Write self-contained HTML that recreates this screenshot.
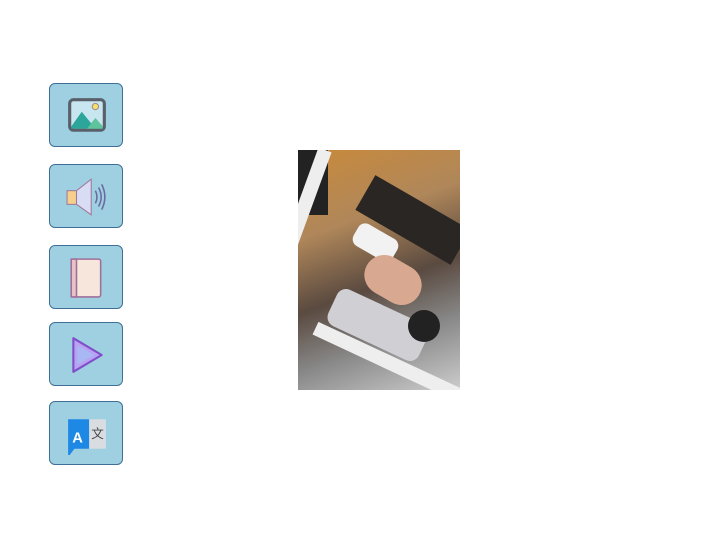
<!DOCTYPE html>
<html><head><style>
body{margin:0;width:720px;height:540px;background:#fff;position:relative;overflow:hidden;font-family:"Liberation Sans",sans-serif}
.b{position:absolute;left:49px;width:74px;height:64px;background:#9fd0e2;border:1px solid #3f6f96;border-radius:6px;box-sizing:border-box}
.b svg{position:absolute;left:16px;top:11px}
.p{position:absolute;left:298px;top:150px;width:162px;height:240px;overflow:hidden;background:#6b5a44}
.p div{position:absolute}
</style></head><body>
<div class="b" style="top:83px"><svg width="42" height="42" viewBox="0 0 40 40"><rect x="2" y="3" width="36" height="32" rx="5" fill="#596069"/><rect x="5" y="6" width="30" height="26" rx="2" fill="#c7e6ef"/><path d="M5 30 L15 16 L24 27 L28 22 L35 30 L35 32 L5 32Z" fill="#2ca59a"/><path d="M20 32 L28 22 L35 30 L35 32Z" fill="#5fc39c"/><circle cx="28" cy="11" r="3" fill="#f4e26a" stroke="#a88" stroke-width="1"/></svg></div>
<div class="b" style="top:164px"><svg width="42" height="42" viewBox="0 0 40 40"><rect x="1" y="14" width="9" height="13" fill="#f6cf8a" stroke="#a07a9a"/><path d="M10 14 L24 3 L24 37 L10 27Z" fill="#d8dcf4" stroke="#a07a9a"/><path d="M28 14 Q31 20 28 26 M31 11 Q36 20 31 29 M34 8 Q40 20 34 32" fill="none" stroke="#6b6aa0" stroke-width="1.5"/></svg></div>
<div class="b" style="top:245px"><svg width="42" height="42" viewBox="0 0 40 40"><rect x="5" y="2" width="28" height="36" rx="2" fill="#f7e6dc" stroke="#a0709a" stroke-width="1.5"/><rect x="5" y="2" width="5" height="36" fill="#e9c3c8" stroke="#a0709a" stroke-width="1.5"/></svg></div>
<div class="b" style="top:322px"><svg width="42" height="42" viewBox="0 0 40 40"><path d="M7 4 L34 20 L7 36Z" fill="#b9a2f2" stroke="#7f4fc9" stroke-width="2" stroke-linejoin="round"/><path d="M11 11 L27 20 L11 29Z" fill="#a7b8f4"/></svg></div>
<div class="b" style="top:401px"><svg width="42" height="42" viewBox="0 0 40 40"><rect x="19" y="6" width="19" height="28" fill="#d9dde2"/><path d="M2 6 L22 6 L22 34 L8 34 L2 42Z" fill="#1e88e5"/><text x="6" y="28" font-size="14" font-weight="bold" fill="#fff" font-family="Liberation Sans">A</text><text x="24" y="24" font-size="12" fill="#444" font-family="Noto Sans CJK SC,sans-serif">文</text></svg></div>
<div class="p">
<div style="left:0;top:0;width:162px;height:240px;background:linear-gradient(160deg,#c98a3a 0%,#b0875a 30%,#5a4a40 55%,#888 75%,#ccc 100%)"></div>
<div style="left:0;top:0;width:30px;height:65px;background:#222"></div>
<div style="left:20px;top:0;width:14px;height:230px;background:#eee;transform:rotate(20deg);transform-origin:top"></div>
<div style="left:60px;top:50px;width:110px;height:40px;background:#2a2624;transform:rotate(30deg)"></div>
<div style="left:55px;top:80px;width:45px;height:25px;background:#f2f2f2;transform:rotate(30deg);border-radius:8px"></div>
<div style="left:65px;top:110px;width:60px;height:40px;background:#d9a890;transform:rotate(30deg);border-radius:20px"></div>
<div style="left:30px;top:155px;width:100px;height:40px;background:#cfcfd4;transform:rotate(25deg);border-radius:10px"></div>
<div style="left:110px;top:160px;width:32px;height:32px;background:#222;border-radius:50%"></div>
<div style="left:10px;top:205px;width:160px;height:14px;background:#eee;transform:rotate(25deg)"></div>
</div>
</body></html>
